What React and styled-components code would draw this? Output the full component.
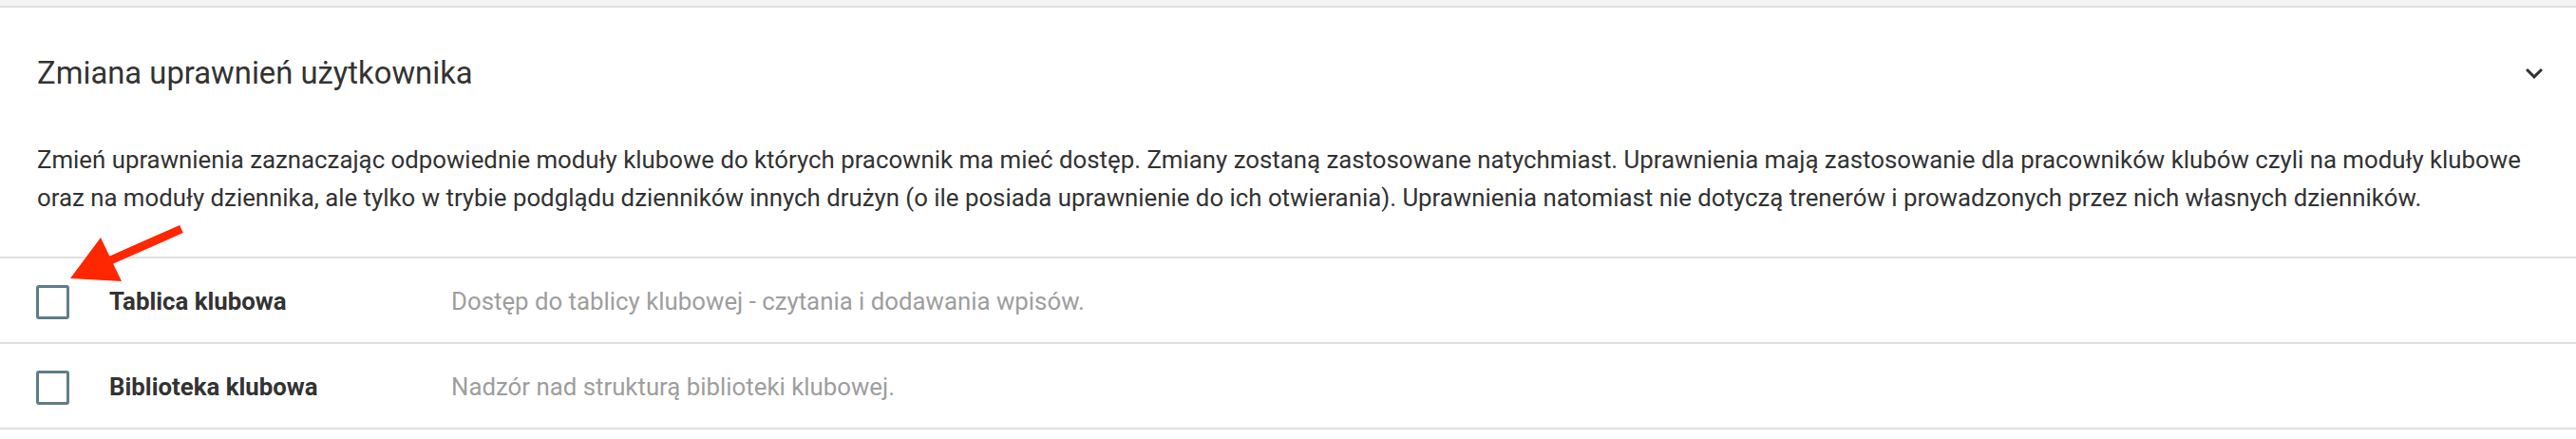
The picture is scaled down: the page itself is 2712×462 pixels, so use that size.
import React from "react";
import styled, { createGlobalStyle } from "styled-components";

const GlobalStyle = createGlobalStyle`
  html, body {
    margin: 0;
    padding: 0;
    background: #ffffff;
  }
  body {
    font-family: Roboto, "Liberation Sans", Arial, sans-serif;
    color: #333333;
    -webkit-font-smoothing: antialiased;
  }
  * { box-sizing: border-box; }
`;

const Page = styled.div`
  position: relative;
  width: 2712px;
  height: 462px;
  overflow: hidden;
  background: #fff;
`;

const TopStrip = styled.div`
  height: 8px;
  background: #f4f4f4;
  border-bottom: 2px solid #e0e0e0;
`;

const Panel = styled.section`
  display: flex;
  flex-direction: column;
`;

const PanelHeader = styled.header`
  display: flex;
  align-items: center;
  justify-content: space-between;
  height: 140px;
  padding: 0 26px 2px 39px;
`;

const Title = styled.h2`
  margin: 0;
  font-size: 32.8px;
  font-weight: 400;
  color: #333;
  letter-spacing: 0;
`;

const Chevron = styled.svg`
  width: 36px;
  height: 36px;
  fill: #333;
  flex: none;
`;

const Intro = styled.p`
  margin: 0;
  padding: 0 26px 42px 39px;
  font-size: 25.8px;
  line-height: 40px;
  color: #333;
`;

const List = styled.div`
  display: flex;
  flex-direction: column;
  border-bottom: 2px solid #e0e0e0;
`;

const Row = styled.label`
  display: grid;
  grid-template-columns: 77px 360px 1fr;
  align-items: center;
  height: 90px;
  padding: 2px 0 0 38px;
  border-top: 2px solid #e0e0e0;
  cursor: pointer;
`;

const Box = styled.span`
  display: block;
  width: 35px;
  height: 36px;
  margin-top: 2px;
  border: 3.5px solid #607d8b;
  border-radius: 3px;
  background: #fff;
`;

const Name = styled.span`
  font-size: 25.8px;
  font-weight: 700;
  color: #333;
`;

const Hint = styled.span`
  font-size: 25.8px;
  font-weight: 400;
  color: #9e9e9e;
`;

const Annotation = styled.svg`
  position: absolute;
  left: 60px;
  top: 230px;
  width: 140px;
  height: 75px;
  pointer-events: none;
  overflow: visible;
`;

const modules = [
  {
    name: "Tablica klubowa",
    hint: "Dostęp do tablicy klubowej - czytania i dodawania wpisów.",
  },
  {
    name: "Biblioteka klubowa",
    hint: "Nadzór nad strukturą biblioteki klubowej.",
  },
];

export default function App() {
  return (
    <Page>
      <GlobalStyle />
      <TopStrip />
      <Panel>
        <PanelHeader>
          <Title>Zmiana uprawnień użytkownika</Title>
          <Chevron viewBox="0 0 24 24" aria-hidden="true">
            <path d="M16.59 8.59L12 13.17 7.41 8.59 6 10l6 6 6-6z" />
          </Chevron>
        </PanelHeader>
        <Intro>
          Zmień uprawnienia zaznaczając odpowiednie moduły klubowe do których
          pracownik ma mieć dostęp. Zmiany zostaną zastosowane natychmiast.
          Uprawnienia mają zastosowanie dla pracowników klubów czyli na moduły
          klubowe oraz na moduły dziennika, ale tylko w trybie podglądu
          dzienników innych drużyn (o ile posiada uprawnienie do ich
          otwierania). Uprawnienia natomiast nie dotyczą trenerów i
          prowadzonych przez nich własnych dzienników.
        </Intro>
        <List>
          {modules.map((m) => (
            <Row key={m.name}>
              <Box />
              <Name>{m.name}</Name>
              <Hint>{m.hint}</Hint>
            </Row>
          ))}
        </List>
      </Panel>
      <Annotation viewBox="0 0 140 75" aria-hidden="true">
        <line x1="131" y1="11" x2="54" y2="45" stroke="#ff2600" strokeWidth="9" />
        <polygon points="14,63 46,20 68,66" fill="#ff2600" />
      </Annotation>
    </Page>
  );
}
